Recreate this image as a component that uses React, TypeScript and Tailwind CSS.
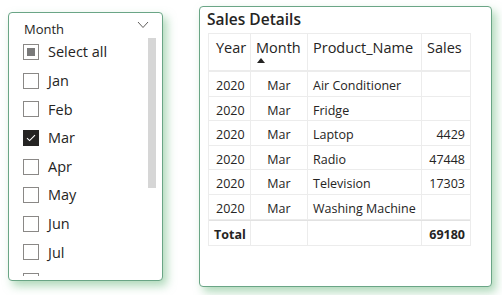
import React from 'react';

const months = ['Jan', 'Feb', 'Mar', 'Apr', 'May', 'Jun', 'Jul'];

const rows = [
  { year: '2020', month: 'Mar', product: 'Air Conditioner', sales: '' },
  { year: '2020', month: 'Mar', product: 'Fridge', sales: '' },
  { year: '2020', month: 'Mar', product: 'Laptop', sales: '4429' },
  { year: '2020', month: 'Mar', product: 'Radio', sales: '47448' },
  { year: '2020', month: 'Mar', product: 'Television', sales: '17303' },
  { year: '2020', month: 'Mar', product: 'Washing Machine', sales: '' },
];

function Checkbox({ state }: { state: 'off' | 'on' | 'partial' }) {
  if (state === 'on') {
    return (
      <div className="w-[16px] h-[16px] flex-shrink-0 bg-[#252423] flex items-center justify-center">
        <svg width="10" height="8" viewBox="0 0 10 8" fill="none">
          <path d="M1 4.2 L3.6 6.6 L9 1.2" stroke="white" strokeWidth="1.1" />
        </svg>
      </div>
    );
  }
  return (
    <div className="w-[16px] h-[16px] flex-shrink-0 border border-[#8a8886] bg-white flex items-center justify-center">
      {state === 'partial' && <div className="w-[8px] h-[8px] bg-[#7a7a7a]" />}
    </div>
  );
}

function Slicer() {
  return (
    <div className="mt-[12px] ml-[8px] w-[155px] h-[269px] flex-shrink-0 border border-[#6aa586] rounded-[4px] bg-white shadow-[4px_5px_10px_rgba(110,185,130,0.55)] flex flex-col overflow-hidden">
      <div className="h-[25px] flex items-end justify-between pl-[15px] pr-[13px]">
        <span className="text-[13px] leading-[18px] text-[#252423]">Month</span>
        <svg width="12" height="8" viewBox="0 0 12 8" className="mb-[9px]" fill="none">
          <path d="M1 1 L6 6.5 L11 1" stroke="#605e5c" strokeWidth="1" />
        </svg>
      </div>
      <div className="flex h-[238px]">
        <div className="flex-1 flex flex-col overflow-hidden pl-[14px]">
          <div className="h-[28.6px] flex-shrink-0 flex items-center gap-[9px]">
            <Checkbox state="partial" />
            <span className="text-[14.5px] text-[#252423]">Select all</span>
          </div>
          {months.map((m) => (
            <div key={m} className="h-[28.6px] flex-shrink-0 flex items-center gap-[9px]">
              <Checkbox state={m === 'Mar' ? 'on' : 'off'} />
              <span className="text-[14.5px] text-[#252423]">{m}</span>
            </div>
          ))}
          {/* next month, only the top of its box shows */}
          <div className="h-[28.6px] flex-shrink-0 flex items-center">
            <Checkbox state="off" />
          </div>
        </div>
        <div className="w-[8px] h-[150px] bg-[#d6d6d6] mr-[6px]" />
      </div>
    </div>
  );
}

function SalesTable() {
  const cols = 'grid grid-cols-[42px_57px_114px_48px]';
  return (
    <div className="mt-[6px] ml-[36px] w-[293px] h-[281px] flex-shrink-0 border border-[#6aa586] rounded-[4px] bg-white shadow-[4px_5px_10px_rgba(110,185,130,0.55)] flex flex-col">
      <div className="h-[26px] pl-[7px] pt-[2px] text-[15.5px] font-semibold text-[#252423] leading-[20px]">
        Sales Details
      </div>
      <div className="ml-[8px] w-[263px] border border-[#ececec] text-[#252423]">
        <div className={`${cols} h-[38px] border-b-2 border-[#ececec]`}>
          <div className="pl-[7px] pt-[4px] text-[14.5px] leading-[20px] border-r border-[#ececec]">Year</div>
          <div className="pl-[5px] pt-[4px] text-[14.5px] leading-[20px] border-r border-[#ececec] flex flex-col">
            <span>Month</span>
            <svg width="8" height="5" viewBox="0 0 8 5" className="ml-[1px]">
              <path d="M0 5 L4 0 L8 5 Z" fill="#252423" />
            </svg>
          </div>
          <div className="pl-[5px] pt-[4px] text-[14.5px] leading-[20px] border-r border-[#ececec]">Product_Name</div>
          <div className="pl-[5px] pt-[4px] text-[14.5px] leading-[20px]">Sales</div>
        </div>
        {rows.map((r) => (
          <div key={r.product} className={`${cols} h-[24.6px] border-b border-[#ececec] text-[12.5px]`}>
            <div className="pl-[7px] pt-[5px] flex items-center border-r border-[#ececec]">{r.year}</div>
            <div className="pt-[5px] flex items-center justify-center border-r border-[#ececec]">{r.month}</div>
            <div className="pl-[5px] pt-[5px] flex items-center border-r border-[#ececec]">{r.product}</div>
            <div className="pr-[5px] pt-[5px] flex items-center justify-end">{r.sales}</div>
          </div>
        ))}
        <div className={`${cols} h-[25px] border-t border-[#e2e2e2] text-[12.5px] font-bold`}>
          <div className="pl-[5px] pt-[5px] flex items-center border-r border-[#ececec]">Total</div>
          <div className="border-r border-[#ececec]" />
          <div className="border-r border-[#ececec]" />
          <div className="pr-[5px] pt-[5px] flex items-center justify-end">69180</div>
        </div>
      </div>
    </div>
  );
}

export default function App() {
  return (
    <div className="w-[502px] h-[295px] bg-white flex items-start overflow-hidden font-['Open_Sans',sans-serif]">
      <Slicer />
      <SalesTable />
    </div>
  );
}
